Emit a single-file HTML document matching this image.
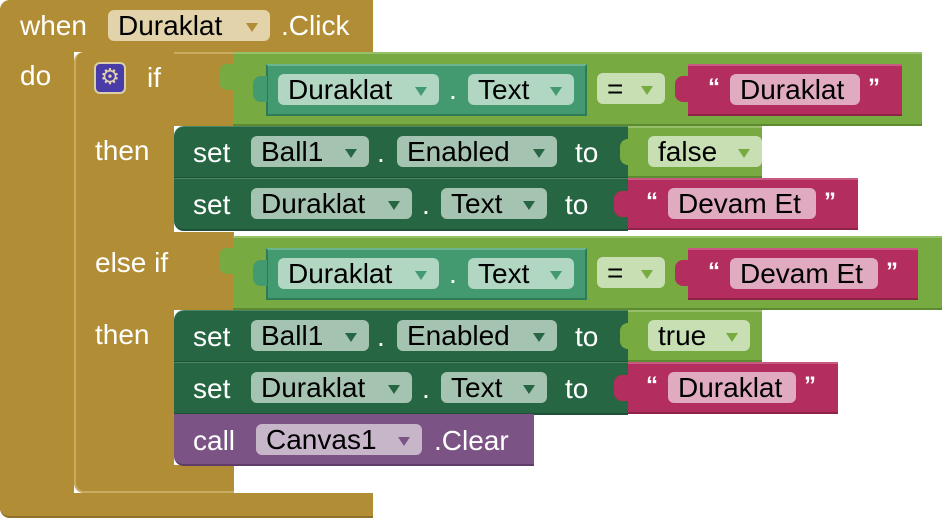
<!DOCTYPE html>
<html><head><meta charset="utf-8"><style>
*{margin:0;padding:0;box-sizing:border-box}
body{width:942px;height:518px;background:#fff;position:relative;overflow:hidden;font-family:"Liberation Sans",sans-serif;font-size:28px}
.a{position:absolute}
.gold{background:#b18e35}
.lg{background:#77ab41;border-top:2px solid #96c06a;border-bottom:2px solid #5d8a30}
.dg{background:#266643;border-top:1px solid #4b8462;border-bottom:2px solid #1d5034}
.tl{background:#439970;border:2px solid #2f7a56;border-top-color:#6ab490}
.mg{background:#b32d5e;border-top:2px solid #c85a82;border-bottom:2px solid #8e2249}
.pp{background:#7c5385;border-bottom:2px solid #5f3d68}
.t{color:#fff;line-height:1}
.q{color:#fff;line-height:1;font-size:24px;font-weight:bold}
.f{position:absolute;border-radius:6px;color:#000;line-height:31px;height:31px;padding-left:10px;white-space:nowrap}
.f i{position:absolute;right:12px;top:13px;width:0;height:0;border-left:6px solid transparent;border-right:6px solid transparent;border-top:9px solid}
.fd{background:#a5c3b1}.fd i{border-top-color:#266643}
.ft{background:#b1d6c2}.ft i{border-top-color:#439970}
.fl{background:#c8dfb3}.fl i{border-top-color:#77ab41}
.fm{background:#e0aac0}
.fp{background:#c7b6ca}.fp i{border-top-color:#7c5385}
.tab{position:absolute;width:14px;height:26px;border-radius:8px 0 0 8px}
</style></head><body>
<div class="a gold" style="left:0;top:0;width:373px;height:52px;border-radius:10px 0 0 0"></div>
<div class="a gold" style="left:0;top:0;width:74px;height:518px;border-radius:10px 0 0 10px"></div>
<div class="a gold" style="left:0;top:493px;width:373px;height:25px;border-radius:0 0 0 10px;border-bottom:2px solid #8f7128"></div>
<div class="a t" style="left:20px;top:12px">when</div>
<div class="f" style="left:108px;top:10px;width:162px;background:#e2d3aa">Duraklat<i style="border-top-color:#b18e35"></i></div>
<div class="a t" style="left:281px;top:12px">.Click</div>
<div class="a t" style="left:20px;top:62px">do</div>
<div class="a gold" style="left:74px;top:52px;width:160px;height:74px;border-radius:10px 0 0 0;border-left:2px solid #c9ab62;border-top:2px solid #c9ab62"></div>
<div class="a gold" style="left:74px;top:52px;width:100px;height:441px;border-radius:10px 0 0 10px;border-left:2px solid #c9ab62"></div>
<div class="a gold" style="left:74px;top:232px;width:160px;height:78px;border-left:2px solid #c9ab62"></div>
<div class="a gold" style="left:74px;top:465px;width:160px;height:28px;border-radius:0 0 0 10px;border-bottom:2px solid #c9ab62;border-left:2px solid #c9ab62"></div>
<div class="a" style="left:94px;top:62px;width:32px;height:32px;background:#4a3ca8;border:2px solid #d9cfa8;border-radius:6px;color:#e2d3aa;font-size:22px;line-height:26px;text-align:center">⚙</div>
<div class="a t" style="left:147px;top:64px">if</div>
<div class="a t" style="left:95px;top:137px">then</div>
<div class="a t" style="left:95px;top:249px">else if</div>
<div class="a t" style="left:95px;top:321px">then</div>
<!-- condition 1 -->
<div class="a lg" style="left:233px;top:52px;width:689px;height:74px"></div>
<div class="tab" style="left:219px;top:64px;background:#77ab41"></div>
<div class="a tl" style="left:266px;top:64px;width:321px;height:52px"></div>
<div class="tab" style="left:253px;top:76px;background:#439970"></div>
<div class="f ft" style="left:278px;top:74px;width:161px">Duraklat<i></i></div>
<div class="a t" style="left:449px;top:76px">.</div>
<div class="f ft" style="left:468px;top:74px;width:106px">Text<i></i></div>
<div class="f fl" style="left:597px;top:73px;width:68px">=<i></i></div>
<div class="a mg" style="left:688px;top:64px;width:214px;height:52px"></div>
<div class="tab" style="left:675px;top:76px;background:#b32d5e"></div>
<div class="a q" style="left:708px;top:76px">“</div>
<div class="f fm" style="left:730px;top:74px;width:130px">Duraklat</div>
<div class="a q" style="left:868px;top:76px">”</div>
<!-- set 1 -->
<div class="a dg" style="left:174px;top:126px;width:454px;height:53px;border-radius:10px 0 0 0"></div>
<div class="a t" style="left:193px;top:139px">set</div>
<div class="f fd" style="left:251px;top:136px;width:118px">Ball1<i></i></div>
<div class="a t" style="left:377px;top:139px">.</div>
<div class="f fd" style="left:397px;top:136px;width:160px">Enabled<i></i></div>
<div class="a t" style="left:575px;top:139px">to</div>
<div class="a lg" style="left:628px;top:126px;width:134px;height:52px"></div>
<div class="tab" style="left:620px;top:139px;background:#77ab41"></div>
<div class="f fl" style="left:648px;top:136px;width:114px">false<i></i></div>
<!-- set 2 -->
<div class="a dg" style="left:174px;top:178px;width:454px;height:53px;border-radius:0 0 0 10px"></div>
<div class="a t" style="left:193px;top:191px">set</div>
<div class="f fd" style="left:251px;top:188px;width:161px">Duraklat<i></i></div>
<div class="a t" style="left:422px;top:191px">.</div>
<div class="f fd" style="left:441px;top:188px;width:106px">Text<i></i></div>
<div class="a t" style="left:565px;top:191px">to</div>
<div class="a mg" style="left:628px;top:178px;width:230px;height:52px"></div>
<div class="tab" style="left:614px;top:191px;background:#b32d5e"></div>
<div class="a q" style="left:646px;top:190px">“</div>
<div class="f fm" style="left:668px;top:188px;width:148px">Devam Et</div>
<div class="a q" style="left:824px;top:190px">”</div>
<!-- condition 2 -->
<div class="a lg" style="left:233px;top:236px;width:709px;height:74px"></div>
<div class="tab" style="left:219px;top:248px;background:#77ab41"></div>
<div class="a tl" style="left:266px;top:248px;width:321px;height:52px"></div>
<div class="tab" style="left:253px;top:260px;background:#439970"></div>
<div class="f ft" style="left:278px;top:258px;width:161px">Duraklat<i></i></div>
<div class="a t" style="left:449px;top:260px">.</div>
<div class="f ft" style="left:468px;top:258px;width:106px">Text<i></i></div>
<div class="f fl" style="left:597px;top:257px;width:68px">=<i></i></div>
<div class="a mg" style="left:688px;top:248px;width:230px;height:52px"></div>
<div class="tab" style="left:675px;top:260px;background:#b32d5e"></div>
<div class="a q" style="left:708px;top:260px">“</div>
<div class="f fm" style="left:730px;top:258px;width:148px">Devam Et</div>
<div class="a q" style="left:886px;top:260px">”</div>
<!-- set 3 -->
<div class="a dg" style="left:174px;top:310px;width:454px;height:53px;border-radius:10px 0 0 0"></div>
<div class="a t" style="left:193px;top:323px">set</div>
<div class="f fd" style="left:251px;top:320px;width:118px">Ball1<i></i></div>
<div class="a t" style="left:377px;top:323px">.</div>
<div class="f fd" style="left:397px;top:320px;width:160px">Enabled<i></i></div>
<div class="a t" style="left:575px;top:323px">to</div>
<div class="a lg" style="left:628px;top:310px;width:134px;height:52px"></div>
<div class="tab" style="left:620px;top:323px;background:#77ab41"></div>
<div class="f fl" style="left:648px;top:320px;width:102px">true<i></i></div>
<!-- set 4 -->
<div class="a dg" style="left:174px;top:362px;width:454px;height:53px"></div>
<div class="a t" style="left:193px;top:375px">set</div>
<div class="f fd" style="left:251px;top:372px;width:161px">Duraklat<i></i></div>
<div class="a t" style="left:422px;top:375px">.</div>
<div class="f fd" style="left:441px;top:372px;width:106px">Text<i></i></div>
<div class="a t" style="left:565px;top:375px">to</div>
<div class="a mg" style="left:628px;top:362px;width:210px;height:52px"></div>
<div class="tab" style="left:614px;top:375px;background:#b32d5e"></div>
<div class="a q" style="left:646px;top:374px">“</div>
<div class="f fm" style="left:668px;top:372px;width:128px">Duraklat</div>
<div class="a q" style="left:804px;top:374px">”</div>
<!-- call -->
<div class="a pp" style="left:174px;top:414px;width:360px;height:52px;border-radius:0 0 0 10px"></div>
<div class="a t" style="left:193px;top:427px">call</div>
<div class="f fp" style="left:256px;top:424px;width:166px">Canvas1<i></i></div>
<div class="a t" style="left:434px;top:427px">.Clear</div>
</body></html>
